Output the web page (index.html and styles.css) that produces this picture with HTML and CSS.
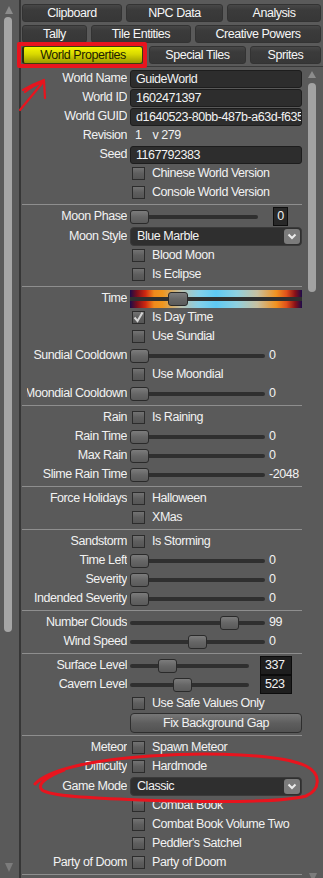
FILE: index.html
```html
<!DOCTYPE html>
<html>
	<head>
		<meta charset="UTF-8">
		<title>World Properties</title>
		<link rel="stylesheet" href="styles.css">
	</head>
	<body>
		<div class="app">
			<div class="vscroll outer">
				<span class="arr up"></span>
				<span class="track"></span>
				<span class="arr down"></span>
			</div>
			<div class="main">
				<div class="tabs">
					<div class="tabrow">
						<div class="tab" style="width:100px">Clipboard</div>
						<div class="tab" style="width:97px">NPC Data</div>
						<div class="tab grow">Analysis</div>
					</div>
					<div class="tabrow">
						<div class="tab" style="width:65px">Tally</div>
						<div class="tab" style="width:100px">Tile Entities</div>
						<div class="tab grow">Creative Powers</div>
					</div>
					<div class="tabrow">
						<div class="tab active" style="width:121px">World Properties</div>
						<div class="tab" style="width:97px;margin-left:2px">Special Tiles</div>
						<div class="tab grow">Sprites</div>
					</div>
				</div>
				<div class="panel">
					<div class="form">
						<!-- world -->
						<div class="row"><div class="lbl"><span>World Name</span></div><div class="txt">GuideWorld</div></div>
						<div class="row"><div class="lbl"><span>World ID</span></div><div class="txt">1602471397</div></div>
						<div class="row"><div class="lbl"><span>World GUID</span></div><div class="txt">d1640523-80bb-487b-a63d-f635</div></div>
						<div class="row"><div class="lbl"><span>Revision</span></div><span class="plain">1</span><span class="plain ver">v 279</span></div>
						<div class="row"><div class="lbl"><span>Seed</span></div><div class="txt">1167792383</div></div>
						<div class="row"><div class="lbl"></div><i class="cb"></i><span class="cbt">Chinese World Version</span></div>
						<div class="row"><div class="lbl"></div><i class="cb"></i><span class="cbt">Console World Version</span></div>
						<div class="sep"></div>
						<!-- moon -->
						<div class="row"><div class="lbl"><span>Moon Phase</span></div><div class="slider short" style="--p:0"><i class="thumb"></i></div><div class="numbox">0</div></div>
						<div class="row tall"><div class="lbl"><span>Moon Style</span></div><div class="select">Blue Marble<span class="dd"><svg width="16" height="15" viewBox="0 0 16 15"><polyline points="4.5,5.5 8,9 11.5,5.5" fill="none" stroke="#ececec" stroke-width="2"/></svg></span></div></div>
						<div class="row"><div class="lbl"></div><i class="cb"></i><span class="cbt">Blood Moon</span></div>
						<div class="row"><div class="lbl"></div><i class="cb"></i><span class="cbt">Is Eclipse</span></div>
						<div class="sep"></div>
						<!-- time -->
						<div class="row"><div class="lbl"><span>Time</span></div><div class="timebar" style="--p:.25"><i class="thumb"></i></div></div>
						<div class="row"><div class="lbl"></div><i class="cb"><svg width="13" height="13" viewBox="0 0 13 13"><polyline points="2.5,6.5 5.5,10 10.5,1.5" fill="none" stroke="#d4d4d4" stroke-width="2"/></svg></i><span class="cbt">Is Day Time</span></div>
						<div class="row"><div class="lbl"></div><i class="cb"></i><span class="cbt">Use Sundial</span></div>
						<div class="row"><div class="lbl"><span>Sundial Cooldown</span></div><div class="slider" style="--p:0"><i class="thumb"></i></div><span class="val">0</span></div>
						<div class="row"><div class="lbl"></div><i class="cb"></i><span class="cbt">Use Moondial</span></div>
						<div class="row"><div class="lbl"><span>Moondial Cooldown</span></div><div class="slider" style="--p:0"><i class="thumb"></i></div><span class="val">0</span></div>
						<div class="sep"></div>
						<!-- rain -->
						<div class="row"><div class="lbl"><span>Rain</span></div><i class="cb"></i><span class="cbt">Is Raining</span></div>
						<div class="row"><div class="lbl"><span>Rain Time</span></div><div class="slider" style="--p:0"><i class="thumb"></i></div><span class="val">0</span></div>
						<div class="row"><div class="lbl"><span>Max Rain</span></div><div class="slider" style="--p:0"><i class="thumb"></i></div><span class="val">0</span></div>
						<div class="row"><div class="lbl"><span>Slime Rain Time</span></div><div class="slider" style="--p:0"><i class="thumb"></i></div><span class="val">-2048</span></div>
						<div class="sep"></div>
						<!-- holidays -->
						<div class="row"><div class="lbl"><span>Force Holidays</span></div><i class="cb"></i><span class="cbt">Halloween</span></div>
						<div class="row"><div class="lbl"></div><i class="cb"></i><span class="cbt">XMas</span></div>
						<div class="sep"></div>
						<!-- sandstorm -->
						<div class="row"><div class="lbl"><span>Sandstorm</span></div><i class="cb"></i><span class="cbt">Is Storming</span></div>
						<div class="row"><div class="lbl"><span>Time Left</span></div><div class="slider" style="--p:0"><i class="thumb"></i></div><span class="val">0</span></div>
						<div class="row"><div class="lbl"><span>Severity</span></div><div class="slider" style="--p:0"><i class="thumb"></i></div><span class="val">0</span></div>
						<div class="row"><div class="lbl"><span>Indended Severity</span></div><div class="slider" style="--p:0"><i class="thumb"></i></div><span class="val">0</span></div>
						<div class="sep"></div>
						<!-- clouds -->
						<div class="row"><div class="lbl"><span>Number Clouds</span></div><div class="slider" style="--p:.78"><i class="thumb"></i></div><span class="val">99</span></div>
						<div class="row"><div class="lbl"><span>Wind Speed</span></div><div class="slider" style="--p:.5"><i class="thumb"></i></div><span class="val">0</span></div>
						<div class="sep"></div>
						<!-- levels -->
						<div class="row"><div class="lbl"><span>Surface Level</span></div><div class="slider mid" style="--p:.28"><i class="thumb"></i></div><div class="lvlbox">337</div></div>
						<div class="row"><div class="lbl"><span>Cavern Level</span></div><div class="slider mid" style="--p:.43"><i class="thumb"></i></div><div class="lvlbox">523</div></div>
						<div class="row"><div class="lbl"></div><i class="cb"></i><span class="cbt">Use Safe Values Only</span></div>
						<div class="row tall"><div class="lbl"></div><div class="btn">Fix Background Gap</div></div>
						<div class="sep"></div>
						<!-- misc -->
						<div class="row"><div class="lbl"><span>Meteor</span></div><i class="cb"></i><span class="cbt">Spawn Meteor</span></div>
						<div class="row"><div class="lbl"><span>Difficulty</span></div><i class="cb"></i><span class="cbt">Hardmode</span></div>
						<div class="row tall"><div class="lbl"><span>Game Mode</span></div><div class="select">Classic<span class="dd"><svg width="16" height="15" viewBox="0 0 16 15"><polyline points="4.5,5.5 8,9 11.5,5.5" fill="none" stroke="#ececec" stroke-width="2"/></svg></span></div></div>
						<div class="row"><div class="lbl"></div><i class="cb"></i><span class="cbt">Combat Book</span></div>
						<div class="row"><div class="lbl"></div><i class="cb"></i><span class="cbt">Combat Book Volume Two</span></div>
						<div class="row"><div class="lbl"></div><i class="cb"></i><span class="cbt">Peddler's Satchel</span></div>
						<div class="row"><div class="lbl"><span>Party of Doom</span></div><i class="cb"></i><span class="cbt">Party of Doom</span></div>
						<div class="sep"></div>
					</div>
					<div class="vscroll inner">
						<span class="arr up"></span>
						<span class="track"></span>
						<span class="arr down"></span>
					</div>
				</div>
			</div>
		</div>
		<!-- red marks drawn over the screenshot -->
		<svg class="marks" width="323" height="878" viewBox="0 0 323 878">
			<g fill="none" stroke="#e8141e" stroke-linecap="round" stroke-linejoin="round">
				<rect x="19" y="44" width="126" height="22" stroke-width="4"/>
				<path d="M20 110 L44 81 M23 90 C28 87 36 83 44 80 M25 92 C30 88 37 84 43 82 M44 81 L45 98" stroke-width="2.2"/>
				<path d="M35 784 C48 770 90 760 150 756 C210 752 280 754 306 766 C322 774 320 790 306 796 C280 803 200 802 140 800 C90 798 50 796 42 790 C36 784 48 776 64 770" stroke-width="3"/>
			</g>
		</svg>
	</body>
</html>
```
FILE: styles.css
```css
body{
	margin: 0;
	width: 323px;
	height: 878px;
	overflow: hidden;
	position: relative;
	background: #5a5a5a;
	color: #f2f2f2;
	font: 12.5px/19px "Liberation Sans", Arial, sans-serif;
	letter-spacing: -0.45px;
}
.app{
	display: flex;
	height: 878px;
}
/* scrollbars */
.vscroll{
	display: flex;
	flex-direction: column;
	flex: none;
	overflow: hidden;
}
.vscroll .arr{
	width: 0;
	height: 0;
	border-left: 4px solid transparent;
	border-right: 4px solid transparent;
}
.vscroll .up{
	border-bottom: 8px solid #8c8c8c;
}
.vscroll .down{
	margin-top: auto;
	border-top: 9px solid #7c7c7c;
}
.vscroll .track{
	width: 8px;
	border-radius: 4px;
	background: #a6a6a6;
}
.outer{
	width: 19px;
}
.outer .up{
	margin: 6px 0 0 5px;
}
.outer .track{
	margin: 3px 0 0 4px;
	height: 615px;
}
.outer .down{
	margin: 0 0 6px 5px;
	margin-top: auto;
}
.inner{
	width: 19px;
}
.inner .up{
	margin: 4px 0 0 4px;
	border-bottom-width: 7px;
}
.inner .track{
	margin: 5px 0 0 4px;
	height: 209px;
	background: #a2a2a2;
}
.inner .down{
	margin: 0 0 -4px 5px;
	margin-top: auto;
}
/* main panel */
.main{
	flex: 1;
	min-width: 0;
	display: flex;
	flex-direction: column;
	border-left: 2px solid #363636;
}
.tabs{
	padding: 4px 2px 2px 1px;
}
.tabrow{
	display: flex;
	gap: 4px;
	margin-bottom: 3px;
}
.tabrow:last-child{
	margin-bottom: 0;
}
.tab{
	flex: none;
	box-sizing: border-box;
	height: 18px;
	line-height: 17px;
	text-align: center;
	color: #f6f6f6;
	background: linear-gradient(#474747, #3b3b3b 30%, #373737);
	border: 1px solid #333;
	border-radius: 3px;
}
.tab.grow{
	flex: 1;
}
.tab.active{
	color: #1c1c00;
	background: linear-gradient(#f6f600, #d8d800 45%, #9a9a00);
	border-color: #3a3a10;
	border-left: 2px solid #2a2a10;
}
.panel{
	flex: 1;
	min-height: 0;
	display: flex;
	border-top: 1px solid #3a3a3a;
}
.form{
	flex: 1;
	min-width: 0;
	padding: 2px 2px 0 2px;
	overflow: hidden;
}
/* rows */
.row{
	display: flex;
	align-items: center;
	height: 19px;
	white-space: nowrap;
}
.row.tall{
	height: 20px;
}
.lbl{
	flex: none;
	width: 100px;
	margin: 0 3px 0 4px;
	display: flex;
	justify-content: flex-end;
	overflow: hidden;
}
.sep{
	height: 1px;
	margin: 2px 0 2px -1px;
	background: #8e8e8e;
}
.txt{
	box-sizing: border-box;
	width: 172px;
	height: 18px;
	line-height: 16px;
	padding-left: 5px;
	background: #2d2d2d;
	border: 1px solid #1d1d1d;
	border-radius: 3px;
	overflow: hidden;
}
.plain{
	padding-left: 5px;
}
.ver{
	padding-left: 11px;
}
.cb{
	flex: none;
	box-sizing: border-box;
	width: 13px;
	height: 13px;
	margin-left: 2px;
	margin-right: 7px;
	background: linear-gradient(#737373, #5e5e5e 50%, #555);
	border: 1px solid #2c2c2c;
}
.cb svg{
	display: block;
	margin: -1px;
}
/* sliders */
.slider{
	flex: none;
	position: relative;
	width: 135px;
	height: 14px;
}
.slider.short{
	width: 128px;
}
.slider.mid{
	width: 119px;
}
.slider::before{
	content: "";
	position: absolute;
	left: 0;
	right: 0;
	top: 5px;
	height: 4px;
	border-radius: 2px;
	background: #2f2f2f;
}
.thumb{
	position: absolute;
	top: 0;
	left: calc((100% - 19px) * var(--p));
	box-sizing: border-box;
	width: 19px;
	height: 14px;
	border: 1px solid #2a2a2a;
	border-radius: 3px;
	background: linear-gradient(#7c7c7c, #666 50%, #5a5a5a);
}
.val{
	margin-left: 4px;
}
.numbox{
	box-sizing: border-box;
	width: 15px;
	height: 19px;
	margin-left: 15px;
	line-height: 17px;
	text-align: center;
	background: #282828;
	border: 1px solid #0e0e0e;
}
.lvlbox{
	box-sizing: border-box;
	width: 32px;
	height: 19px;
	margin-left: 11px;
	padding-left: 4px;
	line-height: 17px;
	background: #1e1e1e;
	border: 1px solid #0c0c0c;
}
.timebar{
	position: relative;
	width: 172px;
	height: 18px;
	background: linear-gradient(90deg, #1c0b4a 0%, #7a0e1c 4%, #d02810 9%, #f08a1c 14%, #f0961e 19%, #b8c0b0 30%, #86d0e8 40%, #5ecaf4 50%, #8ed0e0 62%, #c8c0a0 74%, #f09220 85%, #e0501a 91%, #8a1018 96%, #1c0b4a 100%);
}
.timebar::before{
	content: "";
	position: absolute;
	left: 0;
	right: 0;
	top: 7px;
	height: 4px;
	background: #2f2f2f;
}
.timebar .thumb{
	top: 2px;
	width: 20px;
	left: calc((100% - 20px) * var(--p));
}
/* combo box */
.select{
	box-sizing: border-box;
	display: flex;
	align-items: center;
	width: 172px;
	height: 19px;
	padding-left: 6px;
	background: #2f2f2f;
	border: 1px solid #3a3a3a;
	border-radius: 4px;
}
.dd{
	margin-left: auto;
	margin-right: 1px;
	width: 16px;
	height: 15px;
	background: #7b7b7b;
	border-radius: 3px;
}
.dd svg{
	display: block;
}
.btn{
	box-sizing: border-box;
	width: 172px;
	height: 20px;
	line-height: 18px;
	text-align: center;
	background: linear-gradient(#777, #5e5e5e 50%, #525252);
	border: 1px solid #2e2e2e;
	border-radius: 4px;
}
.marks{
	position: absolute;
	left: 0;
	top: 0;
	pointer-events: none;
}
```
